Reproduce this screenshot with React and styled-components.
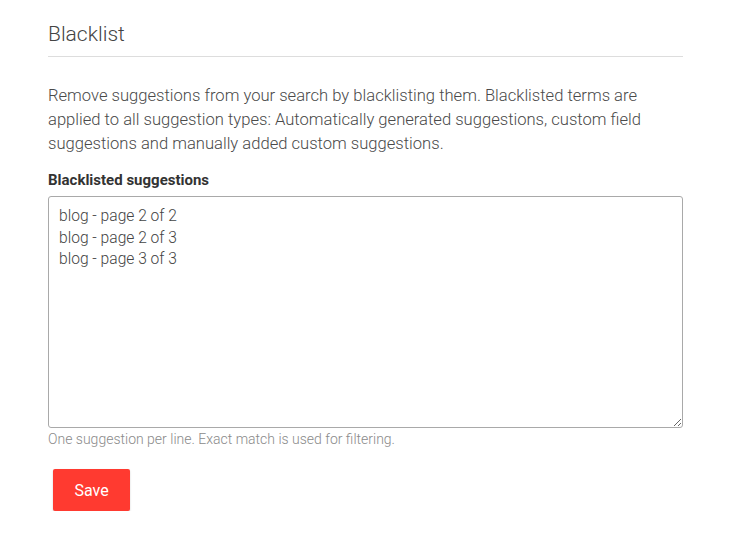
import React from "react";
import styled, { createGlobalStyle } from "styled-components";

const GlobalStyle = createGlobalStyle`
  body {
    margin: 0;
    background: #ffffff;
    font-family: Roboto, "Liberation Sans", sans-serif;
  }
`;

const Page = styled.div`
  padding: 22px 47px 0 48px;
  width: 635px;
`;

const Title = styled.h2`
  margin: 0;
  padding-bottom: 9px;
  border-bottom: 1px solid #dddddd;
  font-size: 21px;
  font-weight: 300;
  line-height: 25px;
  color: #444444;
`;

const Intro = styled.p`
  margin: 27px 0 14px;
  font-size: 16.6px;
  font-weight: 300;
  line-height: 24px;
  color: #4a4a4a;
`;

const Label = styled.label`
  display: block;
  margin-bottom: 6px;
  font-size: 15px;
  font-weight: 700;
  line-height: 20px;
  color: #333333;
`;

const Area = styled.textarea`
  display: block;
  box-sizing: border-box;
  width: 635px;
  height: 232px;
  margin: 0;
  padding: 9px 10px;
  border: 1px solid #a9a9a9;
  border-radius: 3px;
  font-family: Roboto, "Liberation Sans", sans-serif;
  font-size: 15.6px;
  font-weight: 300;
  line-height: 21.7px;
  color: #444444;
  resize: vertical;
  outline: none;
`;

const Help = styled.div`
  margin-top: 2px;
  font-size: 14px;
  font-weight: 300;
  line-height: 18px;
  color: #8a8a8a;
`;

const SaveButton = styled.button`
  display: block;
  margin: 21px 0 0 5px;
  width: 77px;
  height: 42px;
  border: none;
  border-radius: 2px;
  background: #ff3a30;
  box-shadow: 0 1px 2px rgba(0, 0, 0, 0.2);
  color: #ffffff;
  font-family: Roboto, "Liberation Sans", sans-serif;
  font-size: 16px;
  font-weight: 400;
  cursor: pointer;
`;

const App = () => {
  const terms = ["blog - page 2 of 2", "blog - page 2 of 3", "blog - page 3 of 3"];
  return (
    <Page>
      <GlobalStyle />
      <Title>Blacklist</Title>
      <Intro>
        Remove suggestions from your search by blacklisting them. Blacklisted terms are
        applied to all suggestion types: Automatically generated suggestions, custom field
        suggestions and manually added custom suggestions.
      </Intro>
      <Label htmlFor="blacklist">Blacklisted suggestions</Label>
      <Area id="blacklist" defaultValue={terms.join("\n")} />
      <Help>One suggestion per line. Exact match is used for filtering.</Help>
      <SaveButton>Save</SaveButton>
    </Page>
  );
};

export default App;
